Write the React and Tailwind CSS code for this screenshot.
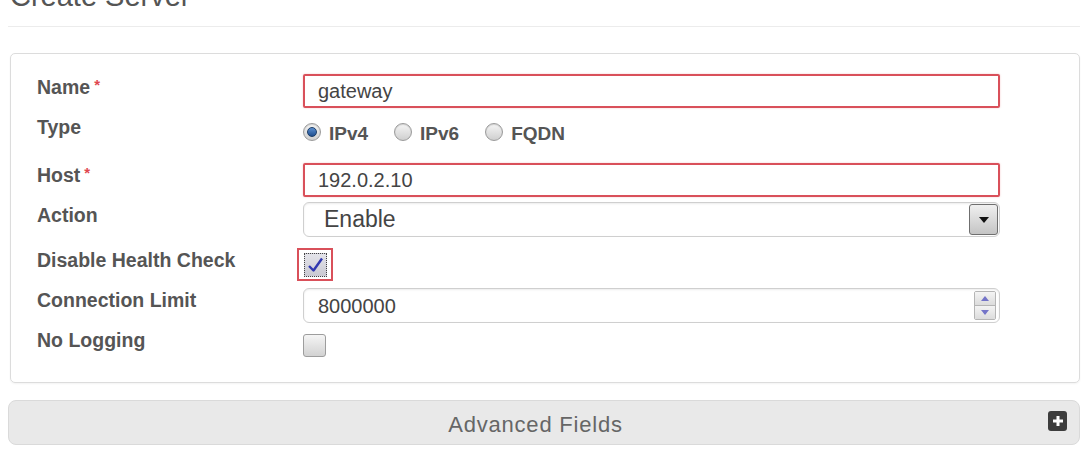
import React from "react";

function Label({ children, required, mt }) {
  return (
    <div className={`w-[266px] shrink-0 text-[19.5px] font-bold leading-[23px] text-[#555] ${mt}`}>
      {children}
      {required && <span className="ml-[4px] align-top text-[15px] leading-[18px] text-[#e0474f]">*</span>}
    </div>
  );
}

function Radio({ checked, label }) {
  return (
    <div className="flex items-center">
      <div className="flex h-[18px] w-[18px] items-center justify-center rounded-full border border-[#9a9a9a] bg-gradient-to-b from-[#f6f6f6] to-[#cfcfcf] shadow-[inset_0_1px_1px_rgba(0,0,0,0.15)]">
        {checked && (
          <div className="h-[10px] w-[10px] rounded-full border border-[#1c3d66] bg-gradient-to-b from-[#5b8fd0] to-[#1f4f8f]" />
        )}
      </div>
      <span className="ml-[8px] mt-[2px] text-[19px] font-bold leading-[23px] text-[#555]">{label}</span>
    </div>
  );
}

export default function App() {
  return (
    <div className="h-[450px] w-[1086px] overflow-hidden bg-white font-['Liberation_Sans',Arial,sans-serif]">
      <h1 className="-mt-[19px] ml-[10px] text-[29px] font-normal leading-[31px] text-[#555]">Create Server</h1>
      <div className="ml-[8px] mt-[14px] w-[1072px] border-t border-[#ececec]" />

      <div className="ml-[10px] mt-[26px] w-[1070px] rounded-[5px] border border-[#dcdcdc] pb-[25px] pl-[26px] pt-[20px] shadow-[0_1px_2px_rgba(0,0,0,0.05)]">
        {/* Name */}
        <div className="flex h-[34px]">
          <Label required mt="mt-[2px]">Name</Label>
          <div className="flex h-[34px] w-[697px] items-center rounded-[2px] border-2 border-[#d9505a] pl-[13px] text-[20px] text-[#444] shadow-[0_0_2px_rgba(217,80,90,0.35)]">
            gateway
          </div>
        </div>
        {/* Type */}
        <div className="flex h-[55px]">
          <Label mt="mt-[8px]">Type</Label>
          <div className="mt-[15px] flex h-[18px] items-center gap-[26px]">
            <Radio checked label="IPv4" />
            <Radio label="IPv6" />
            <Radio label="FQDN" />
          </div>
        </div>
        {/* Host */}
        <div className="flex h-[39px]">
          <Label required mt="mt-[1px]">Host</Label>
          <div className="flex h-[34px] w-[697px] items-center rounded-[2px] border-2 border-[#d9505a] pl-[13px] text-[20px] text-[#444] shadow-[0_0_2px_rgba(217,80,90,0.35)]">
            192.0.2.10
          </div>
        </div>
        {/* Action */}
        <div className="flex h-[46px]">
          <Label mt="mt-[2px]">Action</Label>
          <div className="flex h-[35px] w-[697px] items-center justify-between rounded-[6px] border border-[#cfcfcf] pl-[20px] pr-[1px] shadow-[inset_0_1px_2px_rgba(0,0,0,0.08)]">
            <span className="text-[23px] text-[#444]">Enable</span>
            <div className="flex h-[31px] w-[29px] items-center justify-center rounded-[3px] border border-[#6f6f6f] bg-gradient-to-b from-[#f0f0f0] to-[#c4c4c4]">
              <svg width="10" height="6" viewBox="0 0 10 6">
                <path d="M0 0 L10 0 L5 6 Z" fill="#111" />
              </svg>
            </div>
          </div>
        </div>
        {/* Disable Health Check */}
        <div className="flex h-[40px]">
          <Label mt="mt-[1px]">Disable Health Check</Label>
          <div className="-ml-[6px] flex h-[33px] w-[36px] items-center justify-center border-2 border-[#d9505a]">
            <div className="relative flex h-[24px] w-[23px] items-center justify-center border border-dotted border-[#444] bg-gradient-to-b from-[#e4e4ea] to-[#c9c9d2]">
              <svg width="17" height="16" viewBox="0 0 17 16">
                <path d="M2 9 L6.5 13.5 L15 1.5" stroke="#3038b0" strokeWidth="2.4" fill="none" strokeLinejoin="round" />
              </svg>
            </div>
          </div>
        </div>
        {/* Connection Limit */}
        <div className="flex h-[41px]">
          <Label mt="mt-[1px]">Connection Limit</Label>
          <div className="flex h-[35px] w-[697px] items-center justify-between rounded-[6px] border border-[#cfcfcf] pl-[14px] pr-[3px] shadow-[inset_0_1px_2px_rgba(0,0,0,0.08)]">
            <span className="text-[20px] text-[#444]">8000000</span>
            <div className="flex h-[29px] w-[22px] flex-col overflow-hidden rounded-[2px] border border-[#b5b5b5]">
              <div className="flex flex-1 items-center justify-center border-b border-[#b5b5b5] bg-gradient-to-b from-[#f4f4f4] to-[#dcdcdc]">
                <svg width="8" height="5" viewBox="0 0 8 5"><path d="M0 5 L8 5 L4 0 Z" fill="#7474c8" /></svg>
              </div>
              <div className="flex flex-1 items-center justify-center bg-gradient-to-b from-[#f4f4f4] to-[#dcdcdc]">
                <svg width="8" height="5" viewBox="0 0 8 5"><path d="M0 0 L8 0 L4 5 Z" fill="#7474c8" /></svg>
              </div>
            </div>
          </div>
        </div>
        {/* No Logging */}
        <div className="flex h-[28px]">
          <Label mt="mt-0">No Logging</Label>
          <div className="mt-[5px] h-[23px] w-[23px] rounded-[3px] border border-[#9d9d9d] bg-gradient-to-b from-[#f5f5f5] to-[#d2d2d2]" />
        </div>
      </div>

      <div className="ml-[8px] mt-[17px] flex h-[45px] w-[1072px] items-center rounded-[8px] border border-[#dadada] bg-[#e9e9e9]">
        <div className="mt-[4px] flex-1 pl-[14px] text-center text-[22px] tracking-[0.8px] text-[#666]">Advanced Fields</div>
        <div className="mr-[12px] mb-[3px] flex h-[20px] w-[19px] items-center justify-center rounded-[3px] bg-[#3d3d3d]">
          <svg width="12" height="12" viewBox="0 0 12 12">
            <path d="M6 1 V11 M1 6 H11" stroke="#fff" strokeWidth="3" />
          </svg>
        </div>
      </div>
    </div>
  );
}
